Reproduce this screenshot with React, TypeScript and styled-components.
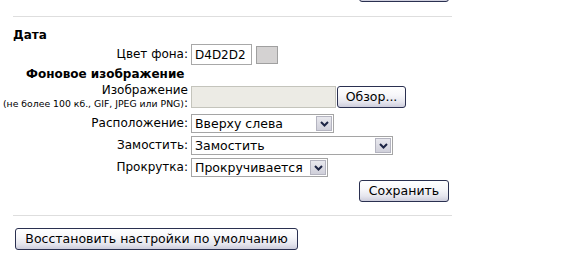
import styled, { createGlobalStyle } from "styled-components";

const GlobalStyle = createGlobalStyle`
  html, body {
    margin: 0;
    padding: 0;
    background: #ffffff;
  }
  body {
    font-family: "DejaVu Sans", Verdana, sans-serif;
    font-size: 12px;
    color: #000000;
  }
`;

const Page = styled.div`
  width: 439px;
  margin-left: 13px;
  display: flex;
  flex-direction: column;
`;

const ButtonRow = styled.div<{ $height?: number; $top?: number }>`
  display: flex;
  justify-content: flex-end;
  align-items: flex-end;
  height: ${(p) => (p.$height !== undefined ? `${p.$height}px` : "auto")};
  margin-top: ${(p) => p.$top || 0}px;
  padding-right: 3px;
`;

const LeftRow = styled.div`
  display: flex;
  margin-top: 12px;
  padding-left: 2px;
`;

const XpButton = styled.button<{ $width: number }>`
  flex: none;
  width: ${(p) => p.$width}px;
  height: 22px;
  padding: 0;
  border: 1px solid #2a3050;
  border-radius: 3px;
  background: linear-gradient(#ffffff 0%, #f7f7fa 40%, #e6e6ee 75%, #cdcddc 100%);
  font-family: "DejaVu Sans", Verdana, sans-serif;
  font-size: 12.5px;
  color: #000000;
  line-height: 20px;
`;

const Divider = styled.div<{ $top: number }>`
  height: 1px;
  margin-top: ${(p) => p.$top}px;
  background: #dedede;
`;

const Title = styled.div`
  margin-top: 10px;
  height: 17px;
  line-height: 17px;
  font-weight: bold;
  font-size: 12px;
`;

const Form = styled.div`
  display: grid;
  grid-template-columns: 175px 1fr;
  column-gap: 3px;
  align-items: center;
`;

/* flex-end alignment lets the long hint spill to the left, like the original table cell */
const Label = styled.div<{ $top?: number }>`
  display: flex;
  flex-direction: column;
  align-items: flex-end;
  white-space: nowrap;
  line-height: 13px;
  margin-top: ${(p) => p.$top || 0}px;
`;

const Hint = styled.span`
  font-size: 9.3px;
`;

const Field = styled.div<{ $top?: number }>`
  display: flex;
  align-items: center;
  margin-top: ${(p) => p.$top || 0}px;
`;

const SubTitle = styled.div`
  grid-column: 1 / span 2;
  height: 19px;
  line-height: 19px;
  padding-left: 13px;
  font-weight: bold;
`;

const TextInput = styled.input<{ $width: number; $disabled?: boolean }>`
  box-sizing: border-box;
  width: ${(p) => p.$width}px;
  height: ${(p) => (p.$disabled ? 22 : 21)}px;
  padding: 0 3px;
  border: 1px solid ${(p) => (p.$disabled ? "#c4c4bc" : "#a8a8a8")};
  background: ${(p) => (p.$disabled ? "#ecebe5" : "#ffffff")};
  font-family: "DejaVu Sans", Verdana, sans-serif;
  font-size: 12px;
  color: #000000;
  margin: 0;
`;

const Swatch = styled.div<{ $color: string }>`
  width: 20px;
  height: 16px;
  margin-left: 4px;
  border: 1px solid #a0a0a0;
  background: ${(p) => p.$color};
`;

const SideButton = styled(XpButton)`
  margin-left: 1px;
`;

const SelectBox = styled.div<{ $width: number }>`
  box-sizing: border-box;
  width: ${(p) => p.$width}px;
  height: 19px;
  display: flex;
  align-items: center;
  border: 1px solid #a5a5a5;
  background: #ffffff;
`;

const NativeSelect = styled.select`
  flex: 1;
  min-width: 0;
  height: 17px;
  padding: 0 0 0 3px;
  border: none;
  outline: none;
  appearance: none;
  background: transparent;
  font-family: "DejaVu Sans", Verdana, sans-serif;
  font-size: 12.5px;
  color: #000000;
`;

const ArrowBox = styled.div`
  box-sizing: border-box;
  width: 16px;
  height: 15px;
  margin-right: 1px;
  display: flex;
  align-items: center;
  justify-content: center;
  border: 1px solid #b4b4c0;
  background: linear-gradient(#e8e8ee, #d0d0da);
`;

function Chevron() {
  return (
    <svg width="9" height="6" viewBox="0 0 9 6">
      <path d="M1 1 L4.5 4.5 L8 1" fill="none" stroke="#1c2444" strokeWidth="2" />
    </svg>
  );
}

function Select({ width, value, top }: { width: number; value: string; top?: number }) {
  return (
    <Field $top={top}>
      <SelectBox $width={width}>
        <NativeSelect defaultValue={value}>
          <option>{value}</option>
        </NativeSelect>
        <ArrowBox>
          <Chevron />
        </ArrowBox>
      </SelectBox>
    </Field>
  );
}

export default function App() {
  return (
    <>
      <GlobalStyle />
      <Page>
        <ButtonRow $height={2}>
          <XpButton $width={90} aria-label="Сохранить" />
        </ButtonRow>
        <Divider $top={14} />
        <Title>Дата</Title>
        <Form>
          <Label>Цвет фона:</Label>
          <Field>
            <TextInput $width={61} defaultValue="D4D2D2" />
            <Swatch $color="#d4d2d2" />
          </Field>

          <SubTitle>Фоновое изображение</SubTitle>

          <Label>
            <span>Изображение</span>
            <span>
              <Hint>(не более 100 кб., GIF, JPEG или PNG)</Hint>:
            </span>
          </Label>
          <Field>
            <TextInput $width={145} $disabled disabled />
            <SideButton $width={69}>Обзор...</SideButton>
          </Field>

          <Label $top={4}>Расположение:</Label>
          <Select width={143} value="Вверху слева" top={4} />

          <Label $top={3}>Замостить:</Label>
          <Select width={202} value="Замостить" top={3} />

          <Label $top={3}>Прокрутка:</Label>
          <Select width={137} value="Прокручивается" top={3} />
        </Form>
        <ButtonRow $top={3}>
          <XpButton $width={90}>Сохранить</XpButton>
        </ButtonRow>
        <Divider $top={13} />
        <LeftRow>
          <XpButton $width={283}>Восстановить настройки по умолчанию</XpButton>
        </LeftRow>
      </Page>
    </>
  );
}
